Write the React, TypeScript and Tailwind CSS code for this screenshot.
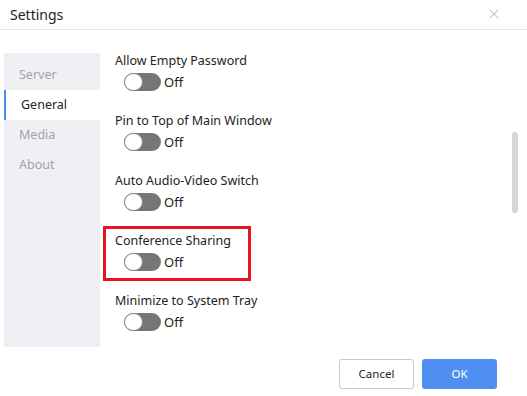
import { useState } from "react";

const navItems = ["Server", "General", "Media", "About"];

const options = [
  "Allow Empty Password",
  "Pin to Top of Main Window",
  "Auto Audio-Video Switch",
  "Conference Sharing",
  "Minimize to System Tray",
];

function Toggle() {
  return (
    <div className="flex items-center gap-[3px] ml-[9px]">
      <div className="w-[37px] h-[18px] rounded-full bg-[#767676] flex items-center">
        <div className="w-[19px] h-[18px] rounded-full bg-white border border-[#8a8a8a]" />
      </div>
      <span className="text-[13px] leading-4 text-[#222]">Off</span>
    </div>
  );
}

export default function App() {
  const [active, setActive] = useState("General");

  return (
    <div
      className="w-[527px] h-[396px] bg-white flex flex-col overflow-hidden"
      style={{ fontFamily: '"Segoe UI", "Noto Sans", sans-serif' }}
    >
      {/* Header */}
      <div className="h-[30px] flex items-center justify-between pl-[10px] pr-[28px] border-b border-[#e6e6e6] shrink-0">
        <span className="text-[14px] text-[#222]">Settings</span>
        <svg width="10" height="10" viewBox="0 0 10 10" className="mb-[1px]">
          <path d="M1 1L9 9M9 1L1 9" stroke="#c9c9c9" strokeWidth="1.1" />
        </svg>
      </div>

      {/* Body */}
      <div className="h-[320px] flex items-start overflow-hidden shrink-0">
        <div className="ml-[4px] mt-[23px] w-[96px] h-[294px] bg-[#eff0f4] pt-[7px] shrink-0">
          {navItems.map((item) => (
            <button
              key={item}
              onClick={() => setActive(item)}
              className={
                item === active
                  ? "w-full h-[30px] flex items-center pl-[15px] pt-[1px] bg-white border-l-2 border-[#4a8ef0] text-[12.5px] text-[#222]"
                  : "w-full h-[30px] flex items-center pl-[15px] pt-[1px] text-[12.5px] text-[#a3a3a3]"
              }
            >
              {item}
            </button>
          ))}
        </div>

        <div className="ml-[3px] flex-1 flex justify-between pr-[9px]">
          <div className="pt-[16px] flex flex-col">
            {options.map((opt, i) => (
              <div
                key={opt}
                className={
                  i === 3
                    ? "w-[148px] h-[55px] mb-[5px] border-[3px] border-[#e8141f] pl-[9px] pt-[4px] flex flex-col gap-[4px]"
                    : "w-[148px] h-[55px] mb-[5px] border-[3px] border-transparent pl-[9px] pt-[4px] flex flex-col gap-[4px]"
                }
              >
                <span className="text-[12.5px] leading-4 text-[#222] whitespace-nowrap">{opt}</span>
                <Toggle />
              </div>
            ))}
          </div>
          <div className="w-[6px] h-[81px] mt-[102px] rounded-full bg-[#d6d6d6]" />
        </div>
      </div>

      {/* Footer */}
      <div className="flex justify-end gap-[8px] pt-[9px] pr-[30px]">
        <button className="w-[75px] h-[30px] rounded-[3px] border border-[#c8c8c8] bg-white text-[11.5px] text-[#222]">
          Cancel
        </button>
        <button className="w-[75px] h-[30px] rounded-[3px] bg-[#4f8ff1] text-[11.5px] text-white">
          OK
        </button>
      </div>
    </div>
  );
}
